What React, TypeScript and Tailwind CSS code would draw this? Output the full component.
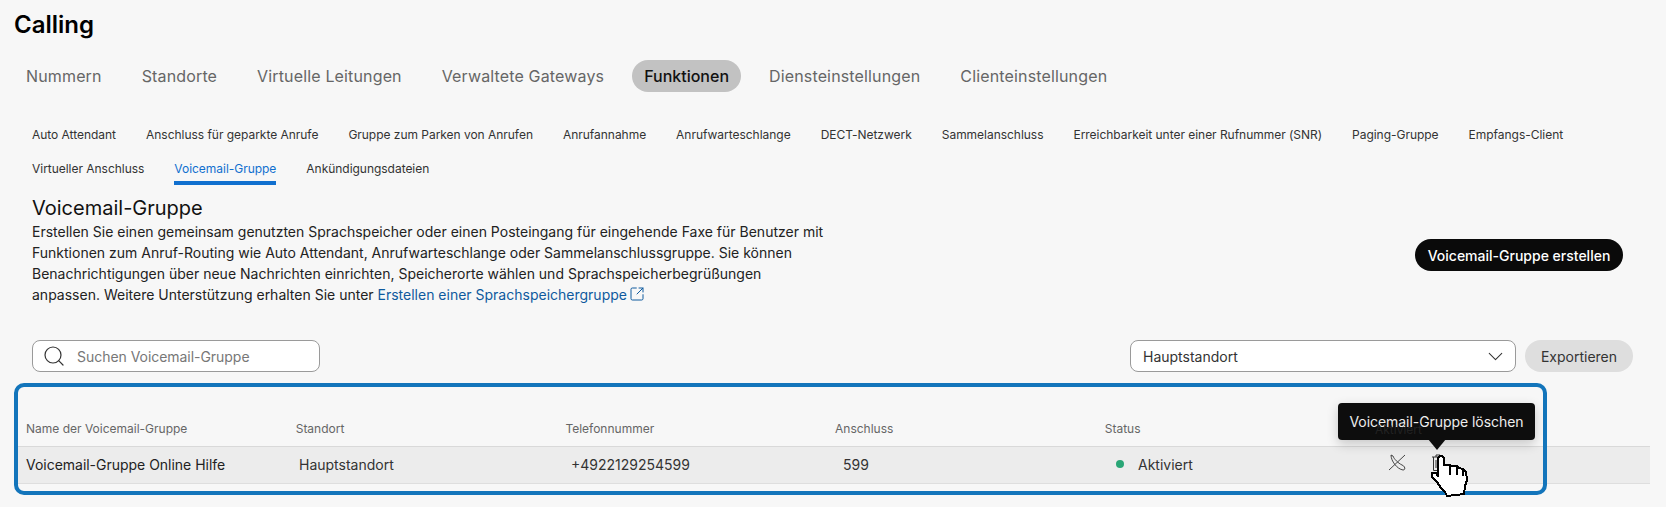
import React from 'react';
import { Search, ChevronDown, SquareArrowOutUpRight } from 'lucide-react';

const mainTabs = ['Nummern', 'Standorte', 'Virtuelle Leitungen', 'Verwaltete Gateways', 'Funktionen', 'Diensteinstellungen', 'Clienteinstellungen'];
const subTabs = ['Auto Attendant', 'Anschluss für geparkte Anrufe', 'Gruppe zum Parken von Anrufen', 'Anrufannahme', 'Anrufwarteschlange', 'DECT-Netzwerk', 'Sammelanschluss', 'Erreichbarkeit unter einer Rufnummer (SNR)', 'Paging-Gruppe', 'Empfangs-Client', 'Virtueller Anschluss', 'Voicemail-Gruppe', 'Ankündigungsdateien'];
const headers = ['Name der Voicemail-Gruppe', 'Standort', 'Telefonnummer', 'Anschluss', 'Status'];

const HandCursor = () => (
  <svg width="40" height="46" viewBox="0 0 40 46" shapeRendering="crispEdges" className="absolute left-[1430px] top-[454px]">
    <path d="M8 4 L10 2 L12 2 L14 4 L14 11 L20 11 L21 12 L27 12 L29 14 L33 15 L36 18 L37 26 L35 32 L34 40 L17 42 L15 38 L11 34 L7 28 L2 23 L2 19 L6 19 L8 22 Z" fill="#fff" stroke="#000" strokeWidth="2" strokeLinejoin="round" />
    <path d="M20 12 L20 21 M27 13 L27 21 M33 16 L33 22" stroke="#000" strokeWidth="1.5" fill="none" />
  </svg>
);

const App = () => {
  return (
    <div className="relative h-[507px] overflow-hidden bg-[#f7f7f7] font-['Inter',sans-serif] text-black">
      <div className="pl-[14px] pt-[9px] text-[24px] font-semibold leading-[32px]">Calling</div>

      <div className="mt-[19px] flex h-[32px] items-center gap-[16px] pl-[14px] text-[16px]">
        {mainTabs.map(tab => (
          <div key={tab} className={tab === 'Funktionen' ? 'flex h-[32px] items-center rounded-full bg-[#c2c2c2] px-[12px] font-[450] text-[#111]' : 'flex h-[32px] items-center px-[12px] tracking-[0.15px] text-[#666]'}>
            {tab}
          </div>
        ))}
      </div>

      <div className="mt-[27px] flex w-[1640px] flex-wrap items-start gap-x-[30px] pl-[32px] text-[12px] tracking-[-0.03px] text-[#333]">
        {subTabs.map(tab => (
          <div key={tab} className={tab === 'Voicemail-Gruppe' ? 'h-[32px] border-b-[4px] border-[#1170cf] pt-[7px] leading-[18px] text-[#1170cf]' : 'h-[34px] pt-[7px] leading-[18px]'}>
            {tab}
          </div>
        ))}
      </div>

      <div className="flex items-start justify-between pl-[32px] pr-[43px] pt-[8px]">
        <div className="w-[800px]">
          <div className="text-[20px] leading-[26px] text-[#111]">Voicemail-Gruppe</div>
          <p className="text-[14px] leading-[21px] text-[#222]">
            Erstellen Sie einen gemeinsam genutzten Sprachspeicher oder einen Posteingang für eingehende Faxe für Benutzer mit Funktionen zum Anruf-Routing wie Auto Attendant, Anrufwarteschlange oder Sammelanschlussgruppe. Sie können Benachrichtigungen über neue Nachrichten einrichten, Speicherorte wählen und Sprachspeicherbegrüßungen anpassen. Weitere Unterstützung erhalten Sie unter <span className="text-[#0f5a9e]">Erstellen einer Sprachspeichergruppe</span>{' '}
            <SquareArrowOutUpRight size={16} strokeWidth={1.5} className="-ml-[2px] inline align-[-2px] text-[#0f5a9e]" />
          </p>
        </div>
        <button className="mt-[44px] h-[32px] w-[208px] rounded-full bg-[#0a0a0a] text-[14px] font-medium text-white">Voicemail-Gruppe erstellen</button>
      </div>

      <div className="mt-[35px] flex items-center justify-between pl-[32px] pr-[33px]">
        <div className="flex h-[32px] w-[288px] items-center gap-[11px] rounded-[8px] border border-[#9a9a9a] bg-white pl-[9px]">
          <Search size={24} strokeWidth={1.2} className="text-[#333]" />
          <span className="text-[14px] tracking-[-0.04px] text-[#777]">Suchen Voicemail-Gruppe</span>
        </div>
        <div className="flex items-center gap-[9px]">
          <div className="flex h-[32px] w-[386px] items-center justify-between rounded-[8px] border border-[#9a9a9a] bg-white pl-[12px] pr-[7px] text-[14px] text-[#333]">
            Hauptstandort
            <ChevronDown size={25} strokeWidth={1} className="text-[#333]" />
          </div>
          <button className="h-[32px] w-[108px] rounded-full bg-[#dedede] text-[14px] text-[#333]">Exportieren</button>
        </div>
      </div>

      <div className="ml-[16px] mt-[36px] w-[1634px]">
        <div className="flex h-[39px] items-center border-b border-[#d9d9d9] pl-[10px] pt-[4px] text-[12px] text-[#666]">
          {headers.map(h => <div key={h} className="w-[269.7px]">{h}</div>)}
        </div>
        <div className="flex h-[37px] items-center border-b border-[#dedede] bg-[#ececec] pb-[2px] pl-[10px] text-[14px] text-[#333]">
          <div className="w-[273px] tracking-[-0.02px] text-[#222]">Voicemail-Gruppe Online Hilfe</div>
          <div className="w-[272px]">Hauptstandort</div>
          <div className="w-[272px]">+4922129254599</div>
          <div className="w-[273px]">599</div>
          <div className="flex w-[272px] items-center gap-[14px]">
            <span className="h-[8px] w-[8px] rounded-full bg-[#2aa676]" />
            Aktiviert
          </div>
          <svg width="18" height="18" viewBox="0 0 18 18" fill="none" stroke="#333" strokeWidth="0.9" className="-mt-[2px]">
            <path d="M1 16 L17 1" />
            <path d="M3 1 C3 7 9 15 15 16 C18 16 17 12 14 11 C10 9 6 5 5 2 Z" />
          </svg>
          <svg width="14" height="18" viewBox="0 0 14 18" fill="none" stroke="#333" strokeWidth="1" className="-mt-[2px] ml-[25px]">
            <path d="M1 3 H12 M5 3 V1 H9 V3 M2.5 3 V16.5 H10.5 V3" />
            <path d="M5 6 V14 M8 6 V14" />
          </svg>
        </div>
      </div>

      <div className="pointer-events-none absolute left-[14px] top-[383px] h-[112px] w-[1533px] rounded-[10px] border-[4px] border-[#1375bb]" />

      <div className="absolute left-[1338px] top-[403px] flex h-[37px] w-[197px] items-center justify-center rounded-[4px] bg-[#0d0d0d] text-[14px] tracking-[-0.05px] text-[#eee] shadow-[0_4px_12px_rgba(0,0,0,0.2)]">
        Voicemail-Gruppe löschen
      </div>
      <span className="absolute left-[1375px] top-[423px] text-[12px] leading-[14px] text-[#222]">Aktiviert</span>
      <div className="absolute left-[1428px] top-[439px] h-0 w-0 border-x-[9px] border-t-[11px] border-x-transparent border-t-[#0d0d0d]" />
      <HandCursor />
    </div>
  );
};

export default App;
